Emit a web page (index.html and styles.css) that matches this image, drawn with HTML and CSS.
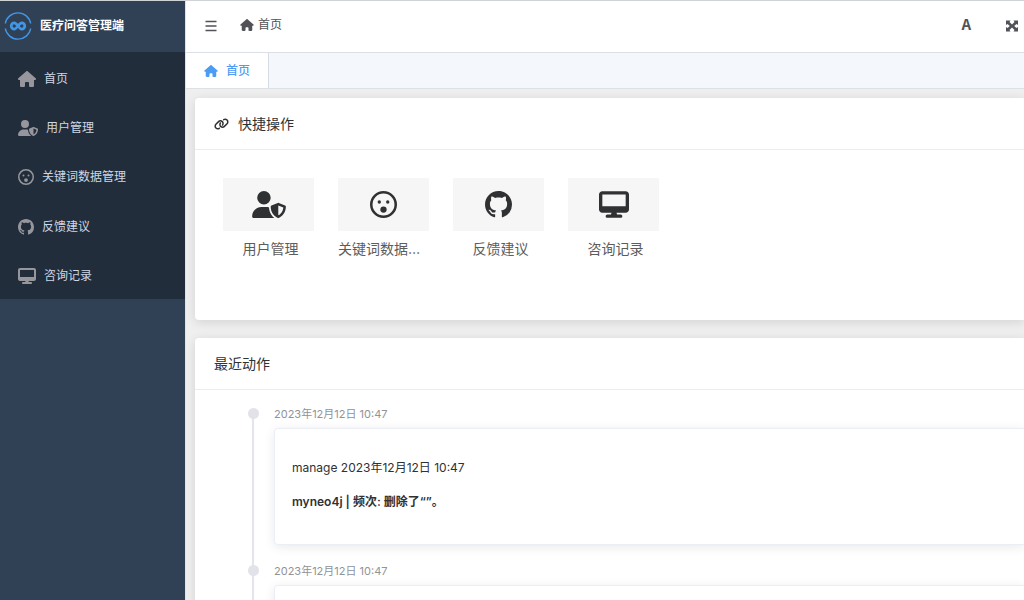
FILE: index.html
```html
<!DOCTYPE html>
<html lang="zh-CN">
<head>
<meta charset="utf-8">
<title>医疗问答管理端</title>
<link rel="stylesheet" href="styles.css">
</head>
<body>
<svg class="sprite" aria-hidden="true">
  <symbol id="home" viewBox="0 0 576 512"><path d="M575.8 255.5c0 18-15 32.1-32 32.1h-32l.7 160.2c0 2.7-.2 5.4-.5 8.1V472c0 22.1-17.9 40-40 40H392c-22.1 0-40-17.9-40-40V384c0-17.7-14.3-32-32-32H256c-17.7 0-32 14.3-32 32v88c0 22.1-17.9 40-40 40H104c-22.1 0-40-17.9-40-40V287.600H32c-18 0-32-14-32-32.100c0-9 3-17 10-24L266.400 8c7-7 15-8 22-8s15 2 21 7L564.800 231.500c8 7 12 15 11 24z"/></symbol>
  <symbol id="user" viewBox="0 0 640 512"><path d="M224 256A128 128 0 1 0 224 0a128 128 0 1 0 0 256zm-45.700 48C79.800 304 0 383.800 0 482.300C0 498.700 13.300 512 29.700 512H418.300c1.800 0 3.500-.2 5.300-.5c-76.300-55.100-99.800-141-103.100-200.200c-16.100-4.800-33.100-7.300-50.700-7.300H178.300zm308.800-78.300l-120 48C358 277.400 352 286.200 352 296c0 63.300 25.900 168.800 134.800 214.200c5.900 2.500 12.600 2.500 18.500 0C614.100 464.800 640 359.300 640 296c0-9.800-6-18.600-15.100-22.300l-120-48c-5.700-2.300-12.100-2.300-17.800 0zM591.400 312c-3.900 50.700-27.200 116.700-95.400 149.700V273.800L591.400 312z"/></symbol>
  <symbol id="face" viewBox="0 0 512 512"><circle cx="256" cy="256" r="232" fill="none" stroke="currentColor" stroke-width="48"/><circle cx="176" cy="208" r="32"/><circle cx="336" cy="208" r="32"/><circle cx="256" cy="352" r="60"/></symbol>
  <symbol id="github" viewBox="0 0 16 16"><path d="M8 0C3.58 0 0 3.58 0 8c0 3.54 2.29 6.53 5.47 7.59.4.07.55-.17.55-.38 0-.19-.01-.82-.01-1.49-2.01.37-2.53-.49-2.69-.94-.09-.23-.48-.94-.82-1.13-.28-.15-.68-.52-.01-.53.63-.01 1.08.58 1.23.82.72 1.21 1.87.87 2.33.66.07-.52.28-.87.51-1.07-1.78-.2-3.64-.89-3.64-3.95 0-.87.31-1.59.82-2.15-.08-.2-.36-1.02.08-2.12 0 0 .67-.21 2.2.82.64-.18 1.32-.27 2-.27s1.36.09 2 .27c1.53-1.04 2.2-.82 2.2-.82.44 1.1.16 1.92.08 2.12.51.56.82 1.27.82 2.15 0 3.07-1.87 3.75-3.65 3.95.29.25.54.73.54 1.48 0 1.07-.01 1.93-.01 2.2 0 .21.15.46.55.38A8.01 8.01 0 0 0 16 8c0-4.42-3.58-8-8-8z"/></symbol>
  <symbol id="desktop" viewBox="0 0 576 512"><path d="M64 0C28.700 0 0 28.700 0 64V352c0 35.300 28.700 64 64 64H240l-10.700 32H160c-17.700 0-32 14.300-32 32s14.300 32 32 32H416c17.700 0 32-14.300 32-32s-14.300-32-32-32H346.700L336 416H512c35.300 0 64-28.700 64-64V64c0-35.300-28.700-64-64-64H64zM512 64V288H64V64H512z"/></symbol>
  <symbol id="link" viewBox="0 0 640 512"><path d="M579.8 267.7c56.5-56.5 56.5-148 0-204.5c-50-50-128.8-56.5-186.3-15.4l-1.6 1.1c-14.4 10.3-17.7 30.3-7.4 44.6s30.3 17.7 44.6 7.4l1.6-1.1c32.1-22.9 76-19.3 103.8 8.6c31.5 31.5 31.5 82.5 0 114L422.3 334.8c-31.5 31.5-82.5 31.5-114 0c-27.9-27.9-31.5-71.8-8.6-103.8l1.1-1.6c10.3-14.4 6.9-34.4-7.4-44.6s-34.4-6.9-44.6 7.4l-1.1 1.6C206.5 251.2 213 330 263 380c56.5 56.5 148 56.5 204.5 0L579.8 267.7zM60.2 244.3c-56.5 56.5-56.5 148 0 204.5c50 50 128.8 56.5 186.3 15.4l1.6-1.1c14.4-10.3 17.7-30.3 7.4-44.6s-30.3-17.7-44.6-7.4l-1.6 1.1c-32.1 22.9-76 19.3-103.8-8.6C74 372 74 321 105.5 289.5L217.7 177.2c31.5-31.5 82.5-31.5 114 0c27.9 27.9 31.5 71.8 8.6 103.9l-1.1 1.6c-10.3 14.4-6.9 34.4 7.4 44.6s34.4 6.9 44.6-7.4l1.1-1.6C433.5 260.8 427 182 377 132c-56.5-56.5-148-56.5-204.5 0L60.2 244.3z"/></symbol>
</svg>
<div class="app">
  <aside class="sidebar">
    <div class="brand">
      <svg class="logo" viewBox="0 0 28 28" aria-hidden="true"><g fill="none" stroke="#4296e6"><path d="M1.300 11.500A12.900 12.900 0 0 1 26.700 11.500M1.300 16.500A12.900 12.900 0 0 0 26.700 16.500" stroke-width="1.400"/><path d="M14 14C12.500 12 11.500 10.900 10.300 10.900a3.100 3.100 0 0 0 0 6.200C12.800 17.100 15.200 10.900 17.700 10.900a3.100 3.100 0 0 1 0 6.200C16.500 17.100 15.500 16 14 14z" stroke-width="2.700"/></g></svg>
      <span>医疗问答管理端</span>
    </div>
    <nav class="menu">
      <a href="#"><svg class="icon wide"><use href="#home"/></svg>首页</a>
      <a href="#"><svg class="icon widest"><use href="#user"/></svg>用户管理</a>
      <a href="#"><svg class="icon"><use href="#face"/></svg>关键词数据管理</a>
      <a href="#"><svg class="icon"><use href="#github"/></svg>反馈建议</a>
      <a href="#"><svg class="icon wide"><use href="#desktop"/></svg>咨询记录</a>
    </nav>
  </aside>
  <div class="page">
    <header class="topbar">
      <button class="tool" aria-label="折叠菜单"><svg class="bars" viewBox="0 0 12 12"><path d="M0.500 1.500h11M0.500 6h11M0.500 10.500h11" fill="none" stroke="currentColor" stroke-width="1.300"/></svg></button>
      <a class="crumb" href="#"><svg><use href="#home"/></svg>首页</a>
      <div class="tools">
        <button class="tool letter">A</button>
        <button class="tool" aria-label="全屏"><svg class="expand" viewBox="0 0 12 12"><path d="M0 0.500h4.500L3.500 2 6 4.500 8.500 2l-1-1.500H12V5l-1.500-1L8.200 6l2.300 2L12 7v4.500H7.500l1-1.500L6 7.500 3.500 10l1 1.500H0V7l1.500 1 2.300-2-2.300-2L0 5z"/></svg></button>
      </div>
    </header>
    <nav class="tabs"><a class="tab" href="#"><svg><use href="#home"/></svg>首页</a></nav>
    <main class="content">
      <section class="card quick">
        <h2><svg><use href="#link"/></svg>快捷操作</h2>
        <div class="actions">
          <a href="#"><span class="tile"><svg class="widest"><use href="#user"/></svg></span><span class="label">用户管理</span></a>
          <a href="#"><span class="tile"><svg><use href="#face"/></svg></span><span class="label">关键词数据管理</span></a>
          <a href="#"><span class="tile"><svg><use href="#github"/></svg></span><span class="label">反馈建议</span></a>
          <a href="#"><span class="tile"><svg class="wide"><use href="#desktop"/></svg></span><span class="label">咨询记录</span></a>
        </div>
      </section>
      <section class="card">
        <h2>最近动作</h2>
        <ol class="timeline">
          <li><time>2023年12月12日 10:47</time>
            <article class="entry"><p>manage 2023年12月12日 10:47</p><p class="strong">myneo4j | 频次: 删除了“”。</p></article></li>
          <li><time>2023年12月12日 10:47</time>
            <article class="entry"></article></li>
        </ol>
      </section>
    </main>
  </div>
</div>
</body>
</html>
```
FILE: styles.css
```css
* { box-sizing: border-box; }
body {
  margin: 0;
  font: 12px/18px Inter, "Noto Sans CJK SC", sans-serif;
  color: #303133;
}
a { color: inherit; text-decoration: none; }
svg { fill: currentColor; flex: none; }
.sprite { position: absolute; width: 0; height: 0; }
.app {
  display: flex;
  height: 100vh;
  overflow: hidden;
  border-top: 1px solid #d0d3d6;
}

.sidebar { flex: 0 0 186px; background: #304156; border-right: 1px solid #dfe3e8; }
.brand {
  display: flex;
  align-items: center;
  gap: 8px;
  height: 51px;
  padding: 0 0 1px 4px;
  color: #fff;
  font-weight: 700;
}
.logo { width: 28px; height: 28px; }
.menu {
  display: grid;
  grid-auto-rows: 1fr;
  height: 247px;
  background: #222d3b;
  color: #cdd7e6;
}
.menu a { display: flex; align-items: center; gap: 8px; padding: 4px 0 0 18px; }
.icon { width: 16px; height: 16px; color: #96969c; }
.icon.wide { width: 18px; }
.icon.widest { width: 20px; }

.page { flex: 1; min-width: 0; display: flex; flex-direction: column; }
.topbar {
  display: flex;
  align-items: center;
  flex: 0 0 52px;
  padding: 0 6px 1px 18px;
  background: #fff;
  border-bottom: 1px solid #dcdfe3;
  color: #505257;
}
.tool {
  display: flex;
  align-items: center;
  padding: 0;
  border: 0;
  background: none;
  color: inherit;
}
.bars { width: 14px; height: 12px; }
.expand { width: 12px; height: 12px; }
.letter { font: bold 16px/18px "Liberation Mono", monospace; }
.crumb { display: flex; align-items: center; gap: 4px; margin-left: 22px; padding-bottom: 2px; }
.crumb svg, .tab svg { width: 14px; height: 12px; }
.tools { display: flex; gap: 35px; margin-left: auto; }
.tabs {
  display: flex;
  flex: 0 0 35px;
  background: #f4f7fb;
  border-bottom: 1px solid #dde1e6;
}
.tab {
  display: flex;
  align-items: center;
  gap: 8px;
  height: 35px;
  padding: 1px 18px 0;
  background: #fff;
  border-right: 1px solid #d8dce5;
  color: #4c9bf5;
  font-weight: 500;
}

.content {
  flex: 1;
  min-height: 0;
  display: flex;
  flex-direction: column;
  gap: 18px;
  padding: 9px 0 0 9px;
  overflow: hidden;
  background: #efefef;
}
.card {
  flex: none;
  background: #fff;
  border-radius: 4px 0 0 4px;
  box-shadow: 0 2px 11px rgba(0, 0, 0, .12);
}
.quick { min-height: 222px; }
h2 {
  display: flex;
  align-items: center;
  gap: 9px;
  height: 52px;
  margin: 0;
  padding: 0 19px;
  border-bottom: 1px solid #ebedf0;
  font-size: 14px;
  font-weight: 400;
}
h2 svg { width: 15px; height: 12px; }
.actions { display: flex; gap: 24px; padding: 28px; }
.actions a { width: 91px; color: #5c5c5c; font-size: 14px; line-height: 20px; }
.tile {
  display: flex;
  align-items: center;
  justify-content: center;
  height: 53px;
  margin-bottom: 8px;
  background: #f6f6f6;
  color: #303133;
}
.tile svg { width: 27px; height: 27px; }
.tile .wide { width: 30px; }
.tile .widest { width: 34px; }
.label {
  display: block;
  margin-right: -4px;
  overflow: hidden;
  text-align: center;
  text-overflow: ellipsis;
  white-space: nowrap;
}

.timeline { margin: 0; padding: 15px 0 0 53px; list-style: none; }
.timeline li { position: relative; padding: 0 0 17px 26px; }
.timeline li::before {
  content: "";
  position: absolute;
  top: 8px;
  bottom: -8px;
  left: 4px;
  width: 2px;
  background: #e4e4ec;
}
.timeline li::after {
  content: "";
  position: absolute;
  top: 3px;
  left: 0;
  width: 11px;
  height: 11px;
  border-radius: 50%;
  background: #e2e2e9;
}
time { display: block; margin-bottom: 5px; color: #909399; font-size: 11px; }
.entry {
  min-height: 117px;
  padding: 30px 17px 16px;
  border: 1px solid #ebeef5;
  border-right: 0;
  border-radius: 4px 0 0 4px;
  box-shadow: 0 2px 11px rgba(0, 0, 0, .09);
}
.entry p { margin: 0 0 16px; }
.strong { font-weight: 600; }
```
